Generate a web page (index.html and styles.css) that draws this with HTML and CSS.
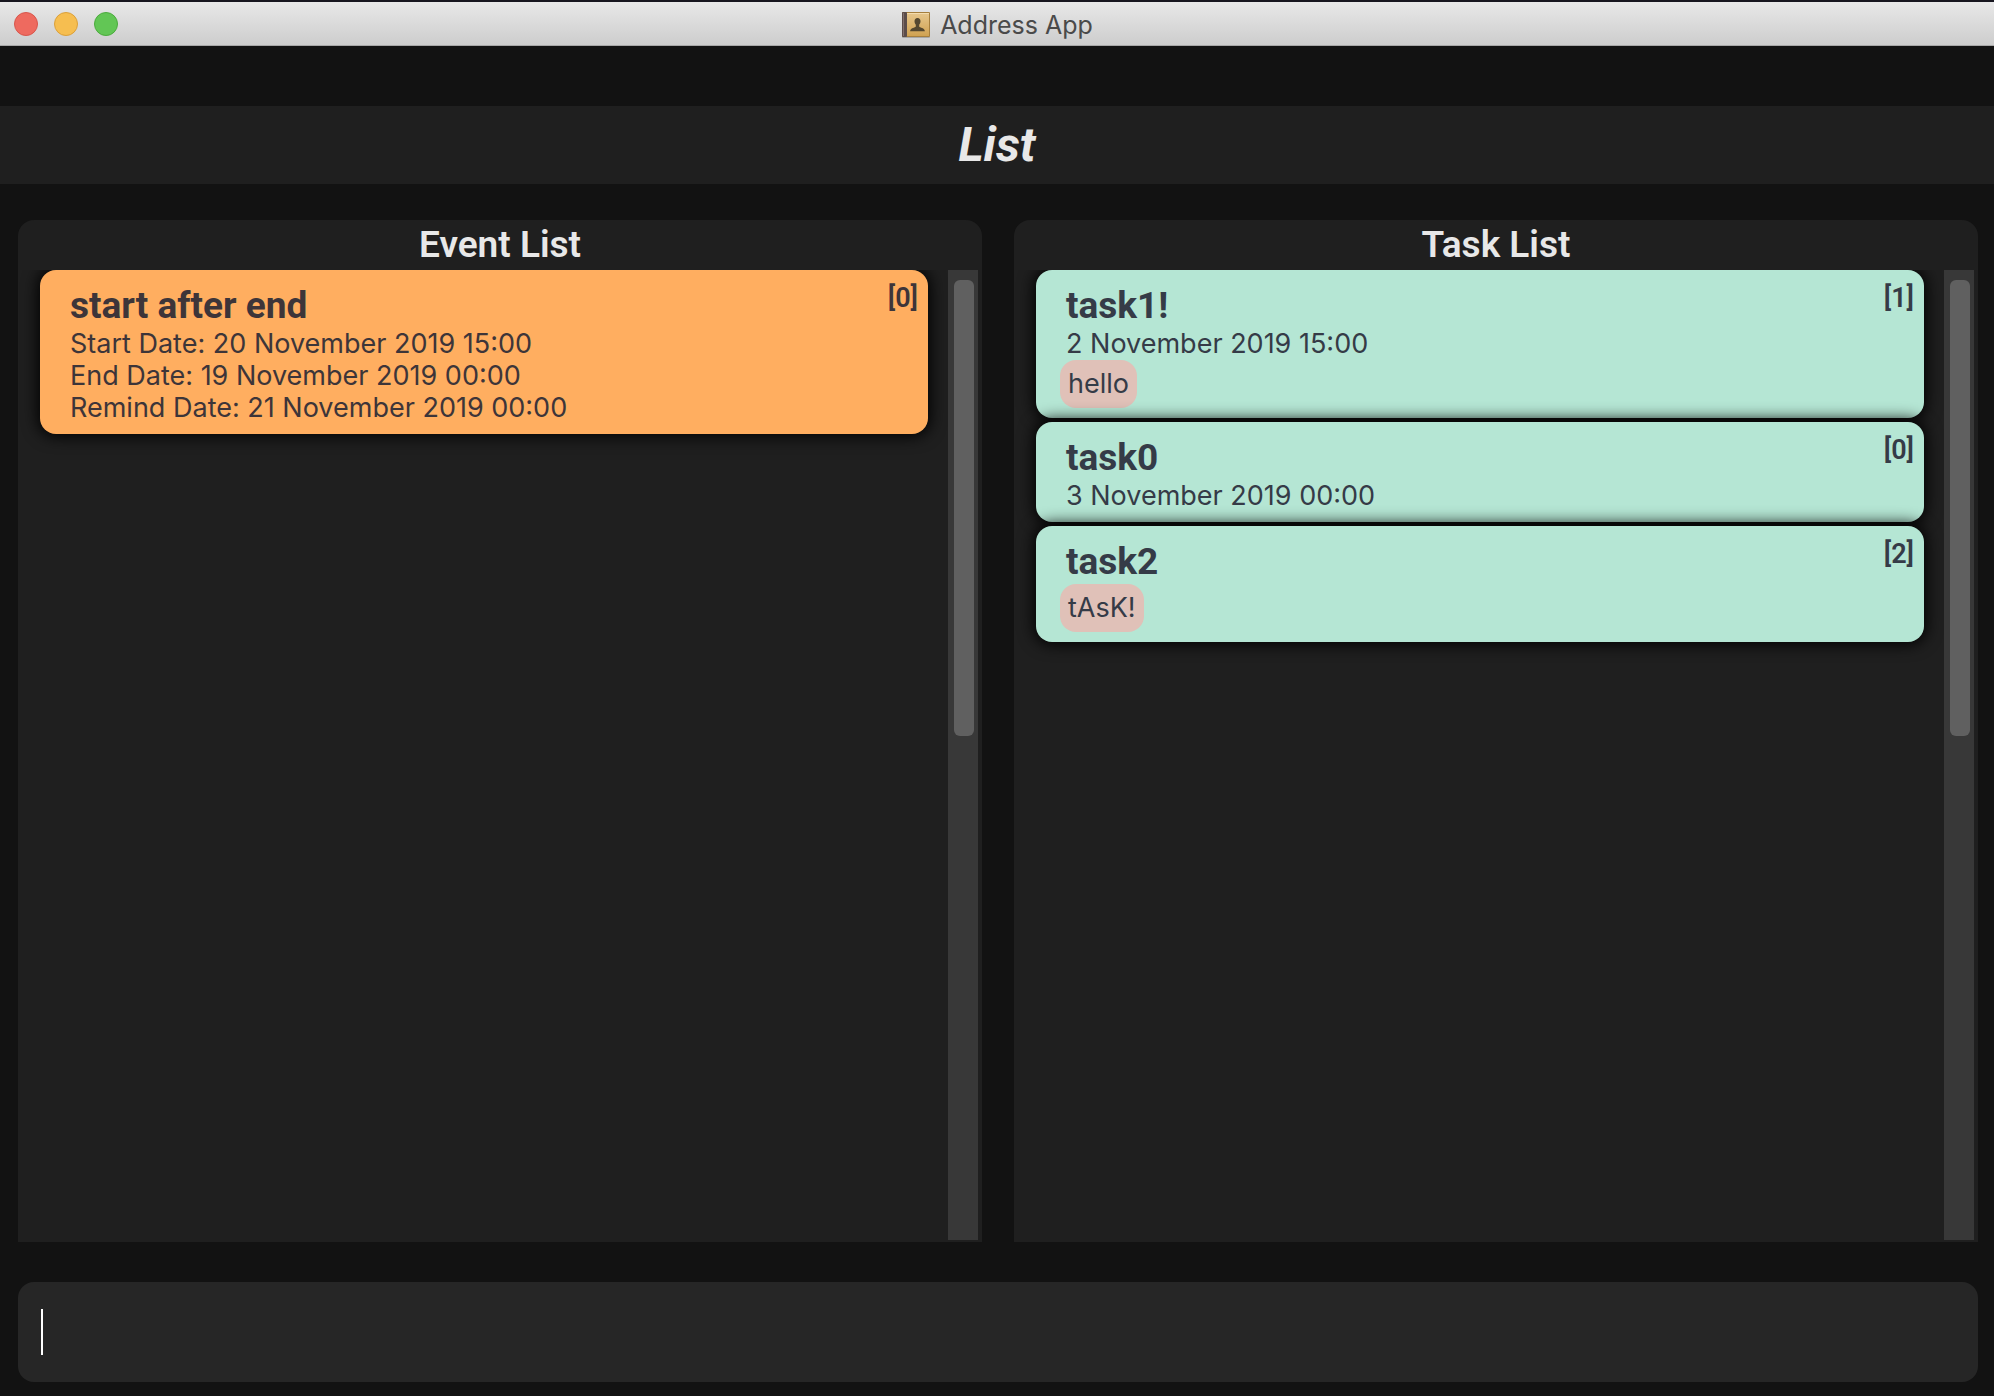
FILE: index.html
```html
<!DOCTYPE html>
<html lang="en">
<head>
<meta charset="utf-8">
<title>Address App</title>
<link rel="stylesheet" href="styles.css">
</head>
<body>
<div class="window">
  <header class="titlebar">
    <div class="controls">
      <button class="control close" type="button" aria-label="Close"></button>
      <button class="control minimize" type="button" aria-label="Minimize"></button>
      <button class="control zoom" type="button" aria-label="Zoom"></button>
    </div>
    <div class="app-title">
      <svg class="app-icon" width="30" height="28" viewBox="0 0 30 28" aria-hidden="true">
        <defs>
          <linearGradient id="cover" x1="0" y1="0" x2="0" y2="1">
            <stop offset="0" stop-color="#e6c68c"/>
            <stop offset="1" stop-color="#d0a252"/>
          </linearGradient>
        </defs>
        <rect x="1" y="25" width="28" height="2" rx="1" fill="#8a8a8a" opacity=".6"/>
        <rect x="1" y="1" width="28" height="25" rx="1" fill="#a67f3d"/>
        <rect x="6" y="2" width="22" height="23" fill="url(#cover)"/>
        <rect x="6" y="2" width="22" height="1" fill="#f3dcae"/>
        <rect x="1" y="1" width="5" height="25" rx="1" fill="#5b4d4b"/>
        <rect x="2" y="2" width="1" height="23" fill="#83706c"/>
        <path d="M16.500 7c2 0 3 1.400 3 3.200 0 1.500-.6 2.700-1.300 3.500v1.700c.4 1.200 5.700 1.300 5.700 4.900H9.100c0-3.600 5.300-3.700 5.700-4.900v-1.700c-.7-.8-1.300-2-1.300-3.500 0-1.800 1-3.200 3-3.200z" fill="#54472f"/>
      </svg>
      <span>Address App</span>
    </div>
  </header>
  <div class="menu"></div>
  <h1 class="page-title">List</h1>
  <main class="lists">
    <section class="panel">
      <h2 class="panel-title">Event List</h2>
      <div class="panel-body">
        <div class="cards">
          <article class="card event">
            <div class="details">
              <h3 class="name">start after end</h3>
              <p class="line">Start Date: 20 November 2019 15:00</p>
              <p class="line">End Date: 19 November 2019 00:00</p>
              <p class="line">Remind Date: 21 November 2019 00:00</p>
            </div>
            <span class="index">[0]</span>
          </article>
        </div>
        <div class="track"><div class="thumb"></div></div>
      </div>
    </section>
    <section class="panel">
      <h2 class="panel-title">Task List</h2>
      <div class="panel-body">
        <div class="cards">
          <article class="card task">
            <div class="details">
              <h3 class="name">task1!</h3>
              <p class="line">2 November 2019 15:00</p>
              <span class="tag">hello</span>
            </div>
            <span class="index">[1]</span>
          </article>
          <article class="card task">
            <div class="details">
              <h3 class="name">task0</h3>
              <p class="line">3 November 2019 00:00</p>
            </div>
            <span class="index">[0]</span>
          </article>
          <article class="card task">
            <div class="details">
              <h3 class="name">task2</h3>
              <span class="tag">tAsK!</span>
            </div>
            <span class="index">[2]</span>
          </article>
        </div>
        <div class="track"><div class="thumb"></div></div>
      </div>
    </section>
  </main>
  <footer class="command">
    <input class="command-input" type="text" aria-label="Command">
  </footer>
</div>
</body>
</html>
```
FILE: styles.css
```css
* {
  box-sizing: border-box;
}

body {
  margin: 0;
  background: #121212;
}

h1, h2, h3, p {
  margin: 0;
}

.window {
  display: flex;
  flex-direction: column;
  min-height: 100vh;
  font-family: Roboto, "Liberation Sans", sans-serif;
}

.titlebar {
  display: grid;
  grid-template-columns: 1fr auto 1fr;
  align-items: center;
  height: 46px;
  border-top: 2px solid #17161f;
  border-bottom: 1px solid #a8a8a8;
  background: linear-gradient(#e8e8e8, #cdcdcd);
}

.controls {
  display: flex;
  gap: 16px;
  padding-left: 14px;
}

.control {
  width: 24px;
  height: 24px;
  padding: 0;
  border: 1px solid;
  border-radius: 50%;
}

.close {
  background: #ee6a5f;
  border-color: #d8564c;
}

.minimize {
  background: #f6be50;
  border-color: #dba03a;
}

.zoom {
  background: #62c655;
  border-color: #4bab3d;
}

.app-title {
  display: flex;
  align-items: center;
  gap: 9px;
  padding-top: 2px;
  font: 25px/32px Inter, "Liberation Sans", sans-serif;
  color: #4a4a4a;
}

.menu {
  height: 60px;
}

.page-title {
  background: #1f1f1f;
  color: #e8e8e8;
  font-size: 48px;
  font-style: italic;
  font-weight: 700;
  line-height: 78px;
  text-align: center;
}

.lists {
  flex: 1;
  display: grid;
  grid-template-columns: 1fr 1fr;
  gap: 32px;
  padding: 36px 16px 40px 18px;
}

.panel {
  display: flex;
  flex-direction: column;
  border-radius: 16px 16px 0 0;
  background: #1f1f1f;
}

.panel-title {
  color: #e8e8e8;
  font-size: 37px;
  font-weight: 600;
  line-height: 50px;
  text-align: center;
}

.panel-body {
  flex: 1;
  display: flex;
  padding: 0 4px 2px 0;
}

.cards {
  flex: 1;
  display: flex;
  flex-direction: column;
  gap: 4px;
  padding: 0 20px 0 22px;
  overflow: hidden;
}

.card {
  display: flex;
  justify-content: space-between;
  align-items: flex-start;
  padding: 10px 10px 10px 30px;
  border-radius: 16px;
  box-shadow: 0 0 16px 2px #000000;
}

.event {
  background: #ffae60;
  color: #3d3539;
}

.task {
  background: #b5e6d4;
  color: #353b47;
}

.details {
  padding-top: 4px;
}

.name {
  font-size: 37px;
  font-weight: 700;
  line-height: 44px;
}

.line {
  font: 27px/32px Inter, "Liberation Sans", sans-serif;
}

.tag {
  display: block;
  width: fit-content;
  margin-left: -6px;
  padding: 0 8px;
  border-radius: 16px;
  background: #e0c1b8;
  font: 27px/48px Inter, "Liberation Sans", sans-serif;
}

.index {
  font-size: 27px;
  font-weight: 600;
  line-height: 36px;
}

.track {
  width: 30px;
  padding: 10px 5px 10px 6px;
  background: #383838;
}

.thumb {
  width: 20px;
  height: 48%;
  border-radius: 6px;
  background: #606060;
}

.command {
  padding: 0 16px 14px 18px;
}

.command-input {
  display: block;
  width: 100%;
  height: 100px;
  padding: 0 22px;
  border: 0;
  border-radius: 16px;
  outline: 0;
  background: linear-gradient(#ffffff, #ffffff) 23px 27px / 2px 46px no-repeat #262626;
  color: #ffffff;
  font: 36px Roboto, "Liberation Sans", sans-serif;
}
```
